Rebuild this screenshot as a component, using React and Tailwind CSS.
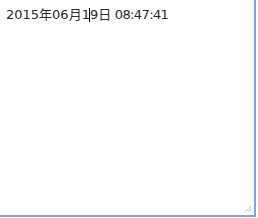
export default function App() {
  return (
    <div className="w-[256px] h-[217px] bg-white border-r-2 border-b-2 border-[#7fa3ea] relative">
      <div className="pl-[6px] pt-[7px] text-[13px] leading-[16px] text-[#2a2a2a] whitespace-pre" style={{ fontFamily: '"DejaVu Sans", "Noto Sans CJK JP", sans-serif' }}>
        <span>2015年06月19日</span>
        <span className="tracking-[-0.6px]"> 08:47:41</span>
      </div>
      <span className="absolute left-[89px] top-[8px] w-px h-[14px] bg-black" />
      <svg className="absolute right-[2px] bottom-[2px]" width="10" height="10" viewBox="0 0 10 10">
        <path d="M9 3 L3 9 M9 6 L6 9" stroke="#777" strokeWidth="1" strokeDasharray="1 1" />
      </svg>
    </div>
  );
}
